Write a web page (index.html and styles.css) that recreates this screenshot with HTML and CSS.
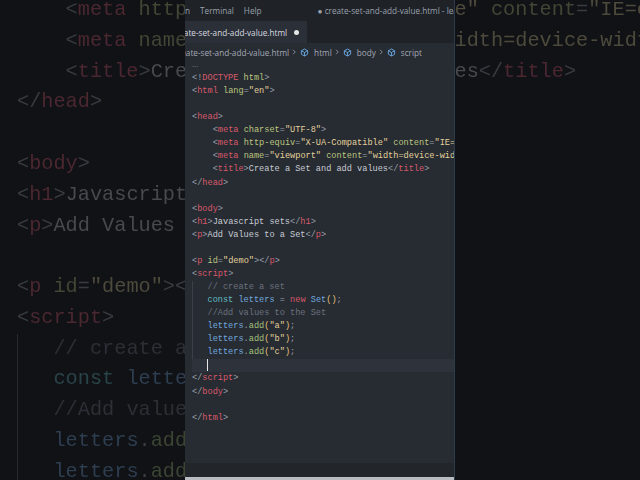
FILE: index.html
```html
<!DOCTYPE html>
<html lang="en">
<head>
    <meta charset="UTF-8">
    <meta name="viewport" content="width=device-width, initial-scale=1.0">
    <title>create-set-and-add-value.html</title>
    <link rel="stylesheet" href="styles.css">
</head>
<body>
    <!-- fondo: el mismo editor ampliado y oscurecido -->
    <div class="backdrop">
        <div class="code">
            <div class="ln"><span class="p">&lt;!</span><span class="t">DOCTYPE</span> <span class="a">html</span><span class="p">&gt;</span></div>
            <div class="ln"><span class="p">&lt;</span><span class="t">html</span> <span class="a">lang</span><span class="p">=</span><span class="s">"en"</span><span class="p">&gt;</span></div>
            <div class="ln"></div>
            <div class="ln"><span class="p">&lt;</span><span class="t">head</span><span class="p">&gt;</span></div>
            <div class="ln">    <span class="p">&lt;</span><span class="t">meta</span> <span class="a">charset</span><span class="p">=</span><span class="s">"UTF-8"</span><span class="p">&gt;</span></div>
            <div class="ln">    <span class="p">&lt;</span><span class="t">meta</span> <span class="a">http-equiv</span><span class="p">=</span><span class="s">"X-UA-Compatible"</span> <span class="a">content</span><span class="p">=</span><span class="s">"IE=edge"</span><span class="p">&gt;</span></div>
            <div class="ln">    <span class="p">&lt;</span><span class="t">meta</span> <span class="a">name</span><span class="p">=</span><span class="s">"viewport"</span> <span class="a">content</span><span class="p">=</span><span class="s">"width=device-width, initial-scale=1.0"</span><span class="p">&gt;</span></div>
            <div class="ln">    <span class="p">&lt;</span><span class="t">title</span><span class="p">&gt;</span>Create a Set and add values<span class="p">&lt;/</span><span class="t">title</span><span class="p">&gt;</span></div>
            <div class="ln"><span class="p">&lt;/</span><span class="t">head</span><span class="p">&gt;</span></div>
            <div class="ln"></div>
            <div class="ln"><span class="p">&lt;</span><span class="t">body</span><span class="p">&gt;</span></div>
            <div class="ln"><span class="p">&lt;</span><span class="t">h1</span><span class="p">&gt;</span>Javascript sets<span class="p">&lt;/</span><span class="t">h1</span><span class="p">&gt;</span></div>
            <div class="ln"><span class="p">&lt;</span><span class="t">p</span><span class="p">&gt;</span>Add Values to a Set<span class="p">&lt;/</span><span class="t">p</span><span class="p">&gt;</span></div>
            <div class="ln"></div>
            <div class="ln"><span class="p">&lt;</span><span class="t">p</span> <span class="a">id</span><span class="p">=</span><span class="s">"demo"</span><span class="p">&gt;&lt;/</span><span class="t">p</span><span class="p">&gt;</span></div>
            <div class="ln"><span class="p">&lt;</span><span class="t">script</span><span class="p">&gt;</span></div>
            <div class="block">
                <div class="ln">   <span class="c">// create a set</span></div>
                <div class="ln">   <span class="k">const</span> <span class="v">letters</span> <span class="p">=</span> <span class="n">new</span> <span class="v">Set</span><span class="y">()</span><span class="p">;</span></div>
                <div class="ln">   <span class="c">//Add values to the Set</span></div>
                <div class="ln">   <span class="v">letters</span><span class="p">.</span><span class="f">add</span><span class="y">(</span><span class="s">"a"</span><span class="y">)</span><span class="p">;</span></div>
                <div class="ln">   <span class="v">letters</span><span class="p">.</span><span class="f">add</span><span class="y">(</span><span class="s">"b"</span><span class="y">)</span><span class="p">;</span></div>
                <div class="ln">   <span class="v">letters</span><span class="p">.</span><span class="f">add</span><span class="y">(</span><span class="s">"c"</span><span class="y">)</span><span class="p">;</span></div>
                <div class="ln">   </div>
            </div>
            <div class="ln"><span class="p">&lt;/</span><span class="t">script</span><span class="p">&gt;</span></div>
            <div class="ln"><span class="p">&lt;/</span><span class="t">body</span><span class="p">&gt;</span></div>
        </div>
    </div>

    <main class="frame">
        <header class="titlebar">
            <nav class="menu"><span>Run</span><span>Terminal</span><span>Help</span></nav>
            <div class="wintitle">● create-set-and-add-value.html - learn-javascript - Visual Studio Code</div>
        </header>

        <div class="tabs">
            <div class="tab">
                <span class="tab-name">create-set-and-add-value.html</span>
                <span class="dirty"></span>
            </div>
        </div>

        <div class="crumbs">
            <span>create-set-and-add-value.html</span>
            <svg class="chev" viewBox="0 0 16 16"><path d="M6 3.5l4.5 4.5L6 12.5"/></svg>
            <svg class="sym" viewBox="0 0 16 16"><path d="M8 1.8l5.6 3.1v6.2L8 14.2l-5.6-3.1V4.9z M2.6 4.9L8 8l5.4-3.1 M8 8v6"/></svg>
            <span>html</span>
            <svg class="chev" viewBox="0 0 16 16"><path d="M6 3.5l4.5 4.5L6 12.5"/></svg>
            <svg class="sym" viewBox="0 0 16 16"><path d="M8 1.8l5.6 3.1v6.2L8 14.2l-5.6-3.1V4.9z M2.6 4.9L8 8l5.4-3.1 M8 8v6"/></svg>
            <span>body</span>
            <svg class="chev" viewBox="0 0 16 16"><path d="M6 3.5l4.5 4.5L6 12.5"/></svg>
            <svg class="sym" viewBox="0 0 16 16"><path d="M8 1.8l5.6 3.1v6.2L8 14.2l-5.6-3.1V4.9z M2.6 4.9L8 8l5.4-3.1 M8 8v6"/></svg>
            <span>script</span>
        </div>

        <section class="editor">
            <div class="fold">···</div>
            <div class="code">
                <div class="ln"><span class="p">&lt;!</span><span class="t">DOCTYPE</span> <span class="a">html</span><span class="p">&gt;</span></div>
                <div class="ln"><span class="p">&lt;</span><span class="t">html</span> <span class="a">lang</span><span class="p">=</span><span class="s">"en"</span><span class="p">&gt;</span></div>
                <div class="ln"></div>
                <div class="ln"><span class="p">&lt;</span><span class="t">head</span><span class="p">&gt;</span></div>
                <div class="ln">    <span class="p">&lt;</span><span class="t">meta</span> <span class="a">charset</span><span class="p">=</span><span class="s">"UTF-8"</span><span class="p">&gt;</span></div>
                <div class="ln">    <span class="p">&lt;</span><span class="t">meta</span> <span class="a">http-equiv</span><span class="p">=</span><span class="s">"X-UA-Compatible"</span> <span class="a">content</span><span class="p">=</span><span class="s">"IE=edge"</span><span class="p">&gt;</span></div>
                <div class="ln">    <span class="p">&lt;</span><span class="t">meta</span> <span class="a">name</span><span class="p">=</span><span class="s">"viewport"</span> <span class="a">content</span><span class="p">=</span><span class="s">"width=device-width, initial-scale=1.0"</span><span class="p">&gt;</span></div>
                <div class="ln">    <span class="p">&lt;</span><span class="t">title</span><span class="p">&gt;</span>Create a Set and add values<span class="p">&lt;/</span><span class="t">title</span><span class="p">&gt;</span></div>
                <div class="ln"><span class="p">&lt;/</span><span class="t">head</span><span class="p">&gt;</span></div>
                <div class="ln"></div>
                <div class="ln"><span class="p">&lt;</span><span class="t">body</span><span class="p">&gt;</span></div>
                <div class="ln"><span class="p">&lt;</span><span class="t">h1</span><span class="p">&gt;</span>Javascript sets<span class="p">&lt;/</span><span class="t">h1</span><span class="p">&gt;</span></div>
                <div class="ln"><span class="p">&lt;</span><span class="t">p</span><span class="p">&gt;</span>Add Values to a Set<span class="p">&lt;/</span><span class="t">p</span><span class="p">&gt;</span></div>
                <div class="ln"></div>
                <div class="ln"><span class="p">&lt;</span><span class="t">p</span> <span class="a">id</span><span class="p">=</span><span class="s">"demo"</span><span class="p">&gt;&lt;/</span><span class="t">p</span><span class="p">&gt;</span></div>
                <div class="ln"><span class="p">&lt;</span><span class="t">script</span><span class="p">&gt;</span></div>
                <div class="block">
                    <div class="ln">   <span class="c">// create a set</span></div>
                    <div class="ln">   <span class="k">const</span> <span class="v">letters</span> <span class="p">=</span> <span class="n">new</span> <span class="v">Set</span><span class="y">()</span><span class="p">;</span></div>
                    <div class="ln">   <span class="c">//Add values to the Set</span></div>
                    <div class="ln">   <span class="v">letters</span><span class="p">.</span><span class="f">add</span><span class="y">(</span><span class="s">"a"</span><span class="y">)</span><span class="p">;</span></div>
                    <div class="ln">   <span class="v">letters</span><span class="p">.</span><span class="f">add</span><span class="y">(</span><span class="s">"b"</span><span class="y">)</span><span class="p">;</span></div>
                    <div class="ln">   <span class="v">letters</span><span class="p">.</span><span class="f">add</span><span class="y">(</span><span class="s">"c"</span><span class="y">)</span><span class="p">;</span></div>
                    <div class="ln current">   <span class="caret"></span></div>
                </div>
                <div class="ln"><span class="p">&lt;/</span><span class="t">script</span><span class="p">&gt;</span></div>
                <div class="ln"><span class="p">&lt;/</span><span class="t">body</span><span class="p">&gt;</span></div>
                <div class="ln"></div>
                <div class="ln"><span class="p">&lt;/</span><span class="t">html</span><span class="p">&gt;</span></div>
            </div>
        </section>

        <div class="panel-strip"></div>
        <div class="bottom-line"></div>
    </main>
</body>
</html>
```

FILE: styles.css
```css
* {
    box-sizing: border-box;
    margin: 0;
    padding: 0;
}

html, body {
    height: 100%;
    overflow: hidden;
}

body {
    font-family: 'Open Sans', sans-serif;
    background-color: #101216;
    display: flex;
    justify-content: center;
    position: relative;
}

/* Fondo ampliado */
.backdrop {
    position: absolute;
    top: 0;
    left: 0;
    width: 100%;
    height: 100%;
    overflow: hidden;
    background-color: #101216;
}

.backdrop .code {
    font-size: 20.25px;
    margin-top: -158.7px;
    padding-left: 17px;
    color: #47494e;
    filter: blur(0.5px);
}

.backdrop .block {
    background-image: linear-gradient(#262a31, #262a31);
}

.backdrop .p { color: #383c42; }
.backdrop .t { color: #4b2730; }
.backdrop .a { color: #424635; }
.backdrop .s { color: #4d4a3c; }
.backdrop .c { color: #2c2f35; }
.backdrop .k { color: #294449; }
.backdrop .n { color: #4b2730; }
.backdrop .v { color: #2e3e50; }
.backdrop .f { color: #3b4534; }
.backdrop .y { color: #4e4534; }

/* Ventana central */
.frame {
    position: relative;
    width: 270px;
    height: 100%;
    display: flex;
    flex-direction: column;
    overflow: hidden;
    background-color: #272b32;
    border-right: 1px solid #2c3a4a;
}

.titlebar {
    height: 21px;
    flex-shrink: 0;
    display: flex;
    align-items: center;
    background-color: #1f2227;
    color: #9aa1ad;
    font-size: 8.2px;
    white-space: nowrap;
}

.menu {
    display: flex;
    margin-left: -15px;
    flex-shrink: 0;
}

.menu span {
    padding: 0 5px;
}

.wintitle {
    flex-shrink: 0;
    margin-left: 51px;
}

.tabs {
    height: 22px;
    flex-shrink: 0;
    display: flex;
    background-color: #1f2227;
}

.tab {
    display: flex;
    align-items: center;
    margin-left: -13px;
    padding-right: 8px;
    background-color: #2b2f37;
    color: #d8dbe0;
    font-size: 8.2px;
    white-space: nowrap;
}

.dirty {
    width: 5px;
    height: 5px;
    margin-left: 7px;
    border-radius: 50%;
    background-color: #e6e6e6;
}

.crumbs {
    height: 18px;
    flex-shrink: 0;
    display: flex;
    align-items: center;
    margin-left: -11px;
    color: #a3a9b4;
    font-size: 8.2px;
    white-space: nowrap;
}

.chev {
    width: 8px;
    height: 8px;
    margin: 0 2px 0 1px;
    fill: none;
    stroke: #a3a9b4;
    stroke-width: 1.5;
}

.sym {
    width: 9px;
    height: 9px;
    margin-right: 5px;
    fill: none;
    stroke: #6fb3f2;
    stroke-width: 1.5;
    stroke-linejoin: round;
}

.editor {
    flex-grow: 1;
    padding-left: 7px;
}

.fold {
    height: 11px;
    padding-top: 2px;
    line-height: 6px;
    font-size: 8px;
    color: #8a909a;
}

/* Código */
.code {
    font-family: 'Liberation Mono', monospace;
    font-size: 8.6px;
    color: #c8ccd4;
}

.ln {
    height: 1.52em;
    line-height: 1.52em;
    white-space: pre;
}

.block {
    background: linear-gradient(#3b4048, #3b4048) no-repeat 0 0 / 1px 100%;
}

.current {
    background-color: #2e333b;
}

.caret {
    display: inline-block;
    width: 1px;
    height: 1.4em;
    vertical-align: middle;
    background-color: #e8e8e8;
}

.p { color: #98a0ac; }
.t { color: #d95a6b; }
.a { color: #bcc67f; }
.s { color: #e3d19c; }
.c { color: #6b727e; }
.k { color: #62bcc4; }
.n { color: #d95a6b; }
.v { color: #72a9df; }
.f { color: #a4c27c; }
.y { color: #e5c07b; }

.panel-strip {
    height: 14px;
    flex-shrink: 0;
    background-color: #22262b;
}

.bottom-line {
    height: 3px;
    flex-shrink: 0;
    background-color: #b9bdc2;
}
```
